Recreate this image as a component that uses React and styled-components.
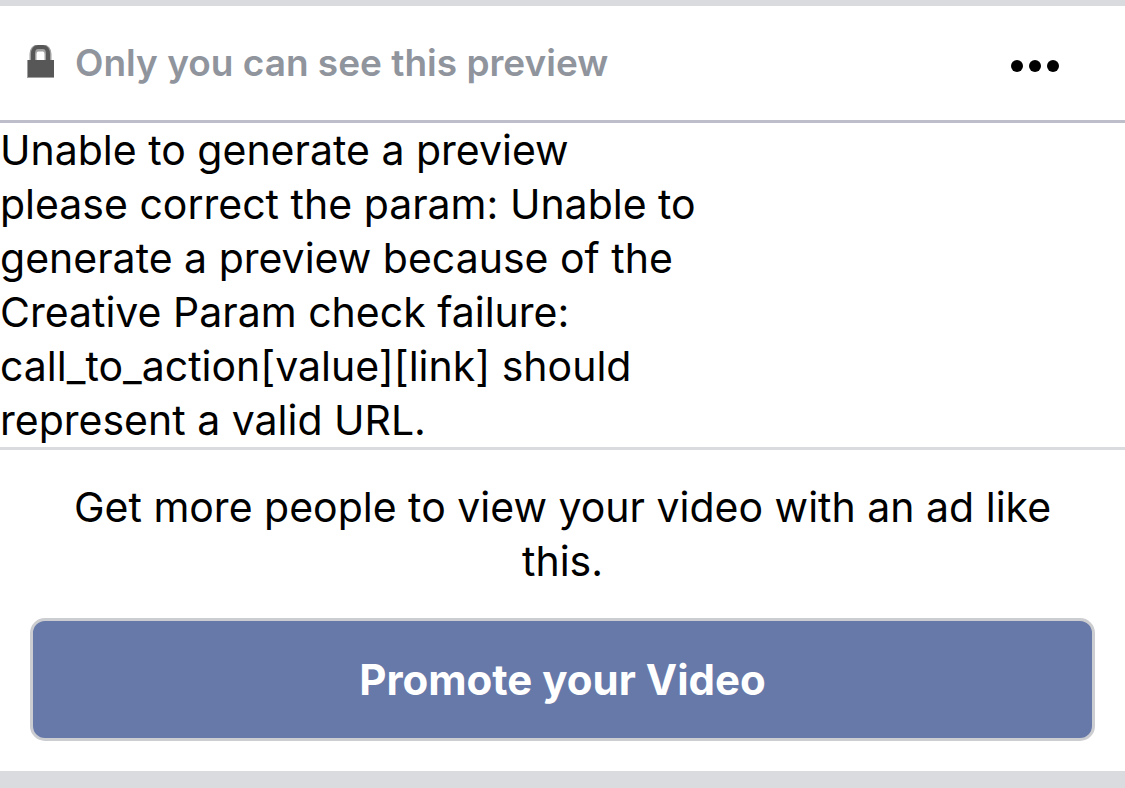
import React from 'react';
import styled, { createGlobalStyle } from 'styled-components';

function App() {
    return (
        <>
            <GlobalStyle />
            <PreviewPage>
                <PreviewHeader>
                    <LockIcon viewBox="0 0 28 36" aria-hidden="true">
                        <path d="M7 17V9C7 5 9 3 12 3h5c3 0 5 2 5 6v8" fill="none" stroke="#a0a0a0" strokeWidth="7" />
                        <path d="M7 17V9C7 5 9 2 12 2h5c3 0 5 3 5 7v8" fill="none" stroke="#575757" strokeWidth="4" />
                        <rect x="1" y="15" width="27" height="18" fill="#a0a0a0" />
                        <rect x="2" y="15" width="26" height="17" fill="#575757" />
                    </LockIcon>
                    <HeaderText>Only you can see this preview</HeaderText>
                    <MoreButton type="button" aria-label="More options">
                        <MoreIcon viewBox="0 0 48 12" aria-hidden="true">
                            <circle cx="6" cy="6" r="6" />
                            <circle cx="24" cy="6" r="6" />
                            <circle cx="42" cy="6" r="6" />
                        </MoreIcon>
                    </MoreButton>
                </PreviewHeader>
                <ErrorWrap>
                    <ErrorText>
                        Unable to generate a preview<br />
                        please correct the param: Unable to generate a preview because of the
                        Creative Param check failure: call_to_action[value][link] should represent a valid URL.
                    </ErrorText>
                </ErrorWrap>
                <PromoteWrap>
                    <PromoteText>Get more people to view your video with an ad like this.</PromoteText>
                    <PromoteButton type="button">Promote your Video</PromoteButton>
                </PromoteWrap>
            </PreviewPage>
        </>
    );
}

export default App;

const GlobalStyle = createGlobalStyle`
  * {
    box-sizing: border-box;
  }
  body {
    margin: 0;
    background: #dadbdf;
    color: #000;
    font-family: Inter, "Liberation Sans", sans-serif;
  }
`;

const PreviewPage = styled.main`
  margin: 6px 0 16px;
  background: #fff;
`;

const PreviewHeader = styled.header`
  display: flex;
  align-items: center;
  padding: 0 54px 0 26px;
  height: 117px;
  border-bottom: 3px solid #bdbec9;
`;

const LockIcon = styled.svg`
  width: 28px;
  height: 36px;
`;

const HeaderText = styled.h1`
  flex: 1;
  margin: 0 0 0 21px;
  color: #90959d;
  font-size: 37px;
  line-height: 48px;
  font-weight: 600;
`;

const MoreButton = styled.button`
  display: flex;
  padding: 18px 12px 12px;
  border: none;
  background: none;
  cursor: pointer;
`;

const MoreIcon = styled.svg`
  width: 48px;
  height: 12px;
`;

const ErrorWrap = styled.section`
  border-bottom: 3px solid #dadbdf;
`;

const ErrorText = styled.p`
  margin: 0;
  max-width: 720px;
  font-size: 41px;
  line-height: 54px;
`;

const PromoteWrap = styled.section`
  padding: 30px;
`;

const PromoteText = styled.p`
  margin: 0 0 30px;
  font-size: 41px;
  line-height: 54px;
  text-align: center;
`;

const PromoteButton = styled.button`
  display: block;
  width: 100%;
  height: 123px;
  padding: 0;
  border: 3px solid #cccdd1;
  border-radius: 15px;
  background: #6779a9;
  color: #fff;
  font-family: inherit;
  font-size: 42px;
  line-height: 54px;
  font-weight: 700;
  cursor: pointer;
`;
